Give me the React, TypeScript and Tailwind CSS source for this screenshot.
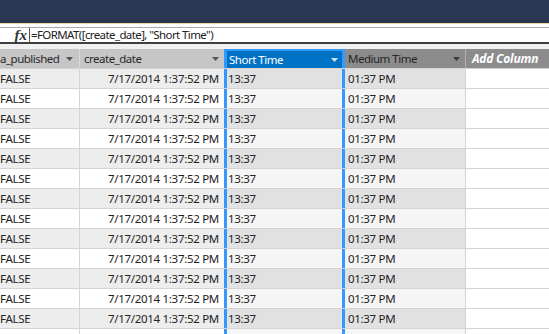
import React from "react";

const ROWS = 13;

function Arrow({ color }: { color: string }) {
  return (
    <svg width="7" height="4" viewBox="0 0 7 4" className="shrink-0">
      <path d="M0 0 L7 0 L3.5 4 Z" fill={color} />
    </svg>
  );
}

export default function App() {
  const rows = Array.from({ length: ROWS }, (_, i) => i);

  return (
    <div className="w-[549px] h-[334px] overflow-hidden bg-white text-[11.5px] tracking-[-0.3px] text-[#222]" style={{ fontFamily: '"Noto Sans", "Open Sans", sans-serif' }}>
      {/* window top */}
      <div className="h-[23px] bg-[#293752]" />
      <div className="h-[1px] bg-[#e9dc9a]" />
      <div className="h-[3px] bg-white" />

      {/* formula bar */}
      <div className="flex h-[17px] border-t border-[#a9a9a9] border-b-2 border-b-[#3f3f3f] bg-white">
        <div className="w-[30px] flex items-center justify-end pr-[2px] border-r border-[#555]">
          <span className="font-bold italic text-[15px] leading-none text-[#333] tracking-normal" style={{ fontFamily: '"Liberation Serif", serif' }}>fx</span>
        </div>
        <div className="flex items-center pl-[1px] leading-none text-[11.5px] tracking-[-0.6px]">=FORMAT([create_date], "Short Time")</div>
      </div>

      <div className="h-[5px] bg-[#f0f0f0]" />

      {/* header */}
      <div className="flex h-[20px] border-b border-[#d4d4d4] text-[11.5px] tracking-[-0.5px]">
        <div className="w-[80px] flex items-center justify-between pl-0 pr-[6px] bg-[#c6c6c6] border-r border-[#dadada] text-[#2a2a2a]">
          <span>a_published</span>
          <Arrow color="#555" />
        </div>
        <div className="w-[144px] flex items-center justify-between pl-[4px] pr-[5px] bg-[#c6c6c6] text-[#2a2a2a]">
          <span>create_date</span>
          <Arrow color="#555" />
        </div>
        <div className="w-[121px] flex items-center justify-between pl-[2px] pr-[4px] bg-[#0072c6] border-x-[3px] border-t-[2px] border-[#3399ff] text-white">
          <span>Short Time</span>
          <Arrow color="#cfe3f5" />
        </div>
        <div className="w-[121px] flex items-center justify-between pl-[3px] pr-[5px] bg-[#8c8c8c] border-r border-[#b0b0b0] text-[#262626]">
          <span>Medium Time</span>
          <Arrow color="#3a3a3a" />
        </div>
        <div className="flex-1 flex items-center pl-[6px] bg-[#8c8c8c] text-white font-bold italic text-[12px] tracking-[-0.2px]">
          <span>Add Column</span>
        </div>
      </div>

      {/* rows */}
      {rows.map((i) => {
        const odd = i % 2 === 0;
        return (
          <div key={i} className="flex h-[20px] border-b border-[#d4d4d4]">
            <div className={`w-[80px] flex items-center pl-0 border-r border-[#d4d4d4] ${odd ? "bg-[#ededed]" : "bg-white"}`}>
              FALSE
            </div>
            <div className={`w-[144px] flex items-center justify-end pr-[5px] ${odd ? "bg-[#ededed]" : "bg-white"}`}>
              7/17/2014 1:37:52 PM
            </div>
            <div className={`w-[121px] flex items-center pl-[1px] border-x-[3px] border-[#3399ff] ${odd ? "bg-[#e1e1e1]" : "bg-[#f5f5f5]"}`}>
              13:37
            </div>
            <div className={`w-[121px] flex items-center pl-[3px] border-r border-[#d4d4d4] ${odd ? "bg-[#e1e1e1]" : "bg-[#f5f5f5]"}`}>
              01:37 PM
            </div>
            <div className="flex-1 bg-white" />
          </div>
        );
      })}
      {/* partially visible last row */}
      <div className="flex h-[20px]">
        <div className="w-[80px] border-r border-[#d4d4d4] bg-white" />
        <div className="w-[144px] bg-white" />
        <div className="w-[121px] border-x-[3px] border-[#3399ff] bg-[#f5f5f5]" />
        <div className="w-[121px] border-r border-[#d4d4d4] bg-[#f5f5f5]" />
        <div className="flex-1 bg-white" />
      </div>
    </div>
  );
}
